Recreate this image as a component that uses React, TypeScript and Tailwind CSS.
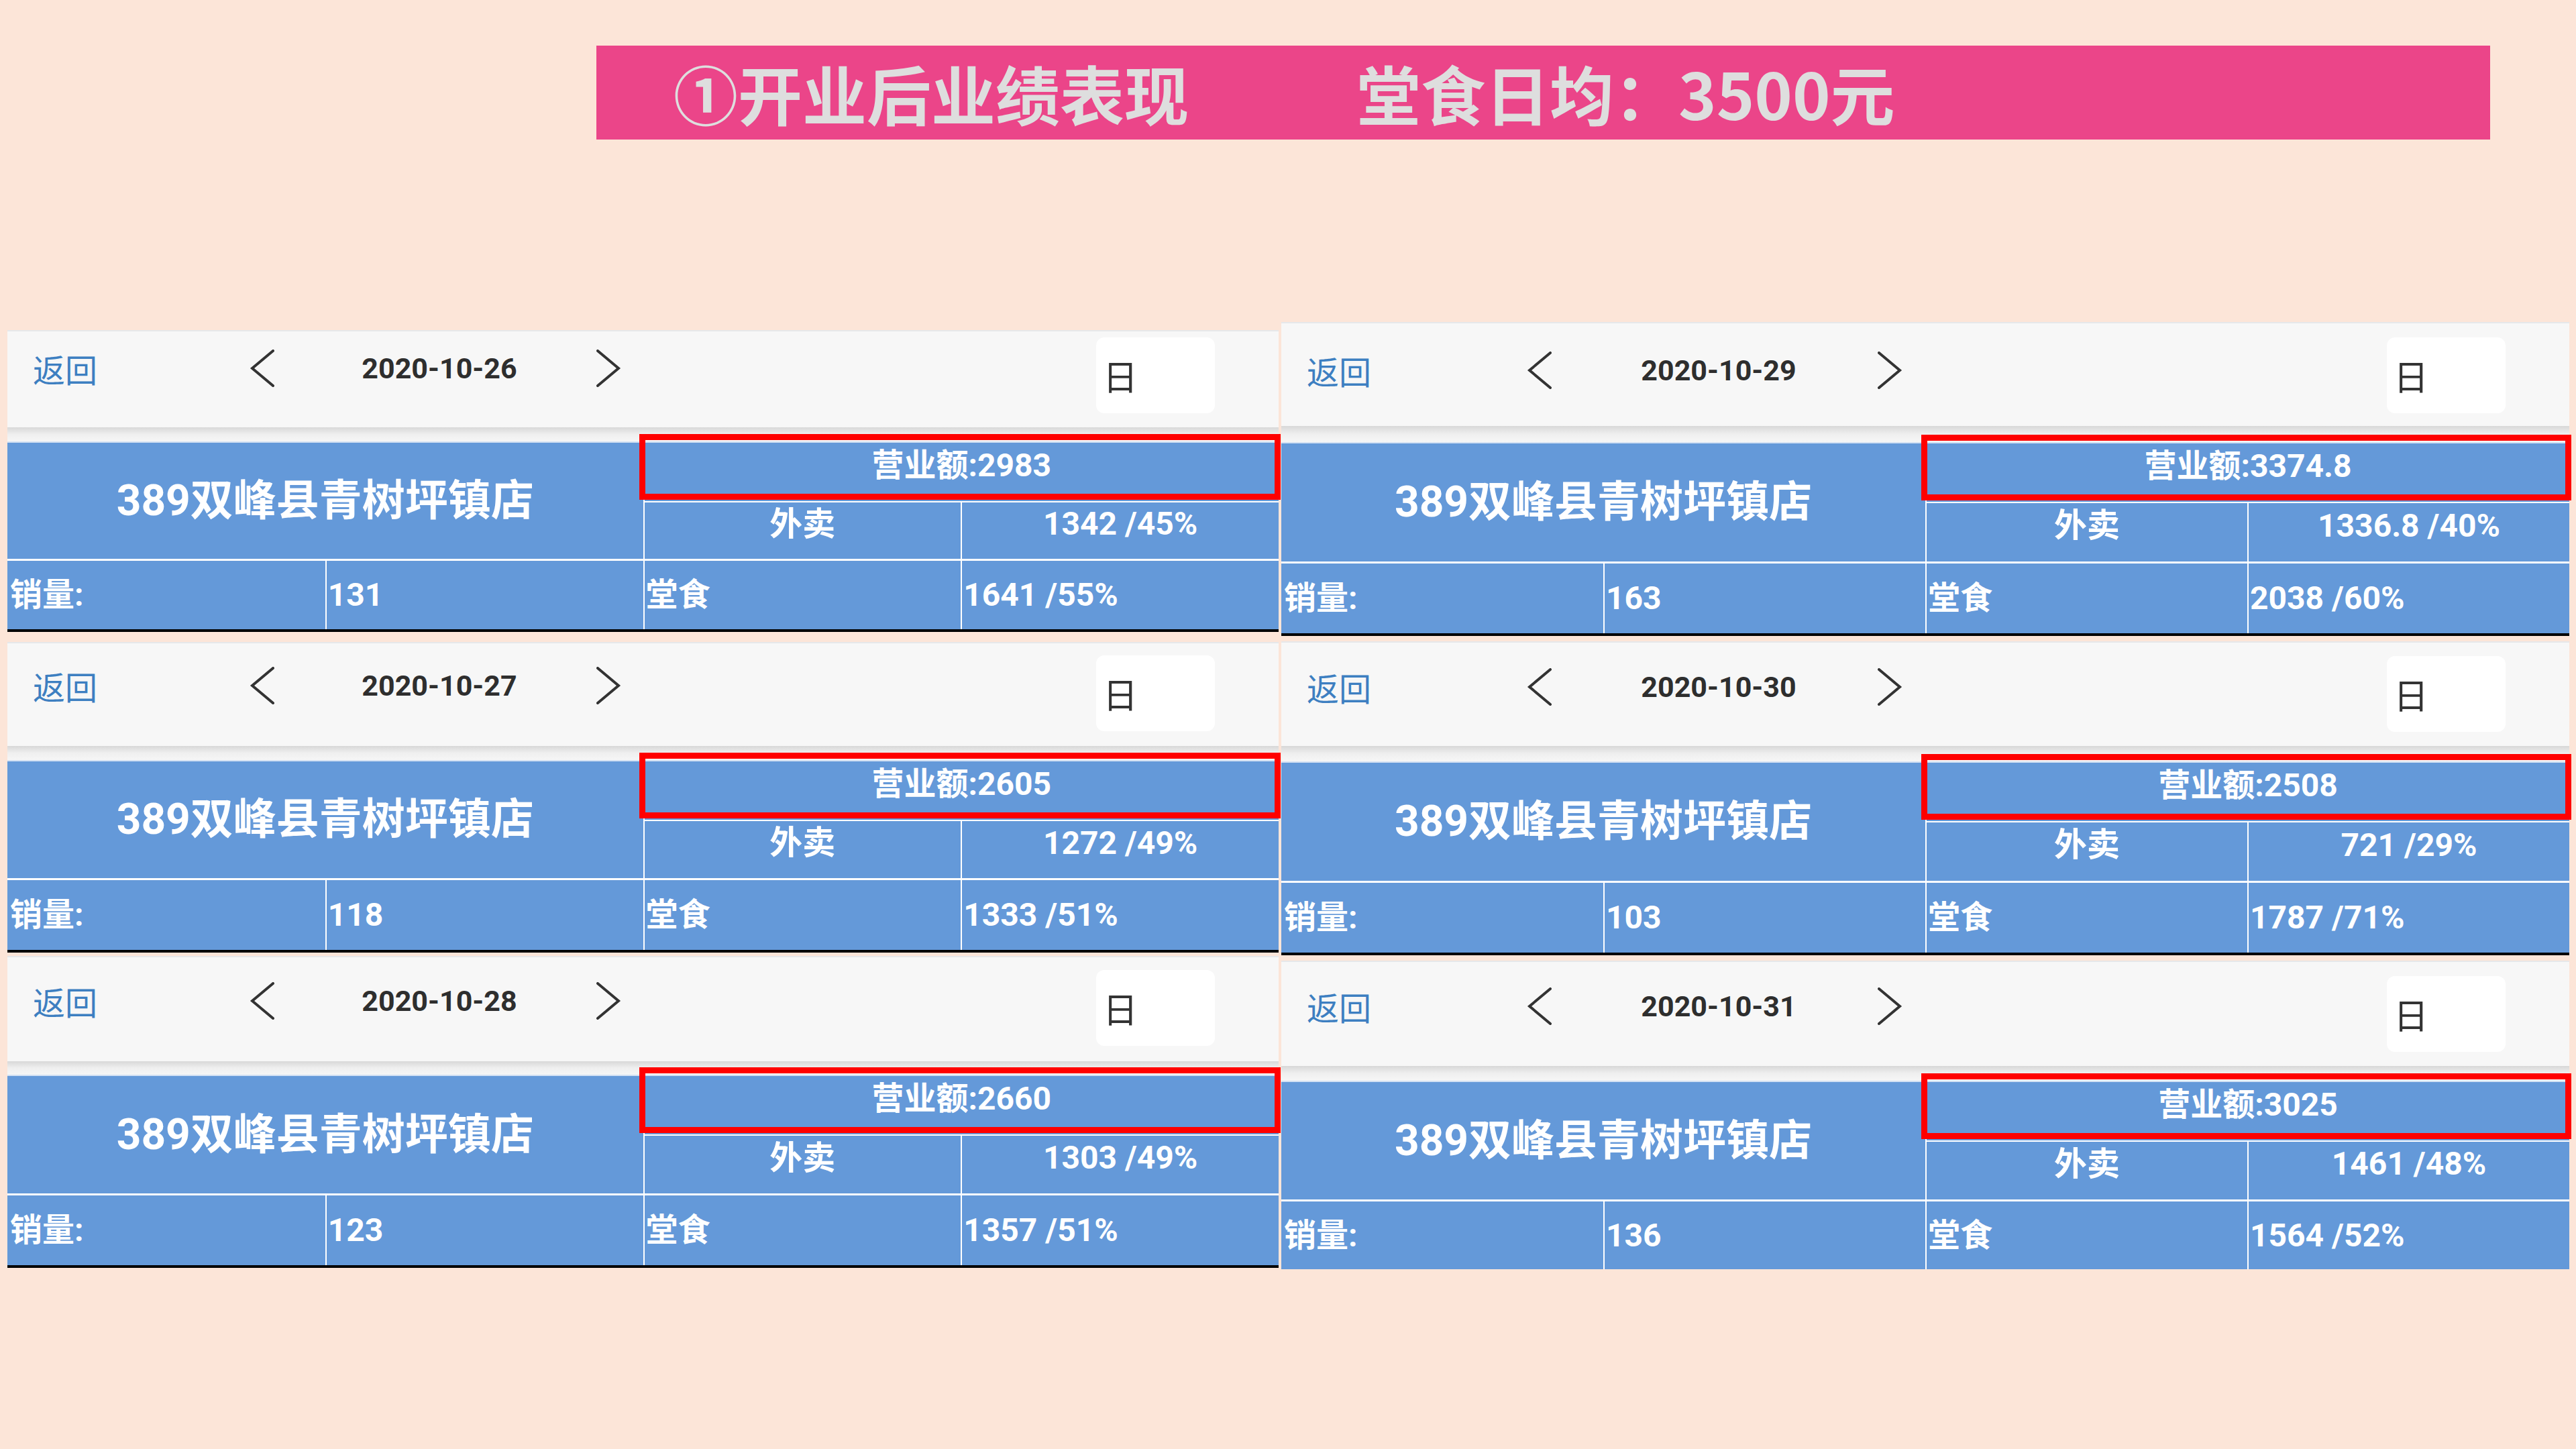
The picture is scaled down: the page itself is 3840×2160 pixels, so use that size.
import React from "react";

type Day = { date: string; rev: string; wm: string; qty: string; ts: string };

type Cfg = {
  head: string; // header height + bottom padding
  box: string; // top margin of the 日 box
  shadow: string;
  r1: string;
  r2: string;
  rb: string;
};

const left: (Day & { cfg: Cfg })[] = [
  {
    date: "2020-10-26", rev: "2983", wm: "1342 /45%", qty: "131", ts: "1641 /55%",
    cfg: { head: "h-[145px] pb-[33px]", box: "mt-[9px]", shadow: "h-[21px]", r1: "h-[87px]", r2: "h-[86px]", rb: "h-[106px]" },
  },
  {
    date: "2020-10-27", rev: "2605", wm: "1272 /49%", qty: "118", ts: "1333 /51%",
    cfg: { head: "h-[155px] pb-[27px]", box: "mt-[18px]", shadow: "h-[21px]", r1: "h-[87px]", r2: "h-[87px]", rb: "h-[108px]" },
  },
  {
    date: "2020-10-28", rev: "2660", wm: "1303 /49%", qty: "123", ts: "1357 /51%",
    cfg: { head: "h-[157px] pb-[25px]", box: "mt-[19px]", shadow: "h-[20px]", r1: "h-[87px]", r2: "h-[88px]", rb: "h-[108px]" },
  },
];
const right: (Day & { cfg: Cfg })[] = [
  {
    date: "2020-10-29", rev: "3374.8", wm: "1336.8 /40%", qty: "163", ts: "2038 /60%",
    cfg: { head: "h-[155px] pb-[13px]", box: "mt-[21px]", shadow: "h-[24px]", r1: "h-[87px]", r2: "h-[89px]", rb: "h-[108px]" },
  },
  {
    date: "2020-10-30", rev: "2508", wm: "721 /29%", qty: "103", ts: "1787 /71%",
    cfg: { head: "h-[156px] pb-[22px]", box: "mt-[20px]", shadow: "h-[23px]", r1: "h-[87px]", r2: "h-[89px]", rb: "h-[108px]" },
  },
  {
    date: "2020-10-31", rev: "3025", wm: "1461 /48%", qty: "136", ts: "1564 /52%",
    cfg: { head: "h-[157px] pb-[23px]", box: "mt-[21px]", shadow: "h-[22px]", r1: "h-[87px]", r2: "h-[88px]", rb: "h-[101px]" },
  },
];

function Chevron({ dir }: { dir: "l" | "r" }) {
  return (
    <svg width="40" height="56" viewBox="0 0 40 56" className="shrink-0">
      <polyline
        points={dir === "l" ? "35,2 4,28 35,54" : "5,2 36,28 5,54"}
        fill="none"
        stroke="#333333"
        strokeWidth="4"
        strokeLinecap="round"
        strokeLinejoin="miter"
      />
    </svg>
  );
}

function Panel({ d, cfg, last, big }: { d: Day; cfg: Cfg; last?: boolean; big?: boolean }) {
  return (
    <div className="flex flex-col">
      <div className={`flex items-center bg-[#f7f7f7] border-t-2 border-[#e6e8ea] ${cfg.head}`}>
        <span className="ml-[38px] w-[96px] shrink-0 text-[48px] leading-none text-[#3d7fc1] font-['Noto_Sans_CJK_SC',sans-serif]">
          返回
        </span>
        <div className={`flex items-center ${big ? "ml-[232px]" : "ml-[227px]"}`}>
          <Chevron dir="l" />
          <div
            className={`pl-[12px] text-center text-[43px] font-bold leading-none text-[#2e2e2e] font-['Roboto','Noto_Sans_CJK_SC',sans-serif] ${
              big ? "w-[480px]" : "w-[474px]"
            }`}
          >
            {d.date}
          </div>
          <Chevron dir="r" />
        </div>
        <div
          className={`ml-auto mr-[95px] self-start flex h-[113px] w-[177px] items-center rounded-[12px] bg-white pl-[10px] ${cfg.box}`}
        >
          <span className="text-[52px] leading-none text-[#333333] font-['Noto_Sans_CJK_SC',sans-serif]">日</span>
        </div>
      </div>
      <div className={`bg-linear-to-b from-[#d8d8d8] via-[#efefef] to-[#f6f6f6] ${cfg.shadow}`} />
      <div className="relative font-['Roboto','Noto_Sans_CJK_SC',sans-serif] font-bold text-white">
        <div className="grid grid-cols-4 border-t-2 border-[#d3e1f3] bg-[#6499d9]">
          <div className="col-span-2 row-span-2 flex items-center justify-center text-[64px] leading-none">
            389双峰县青树坪镇店
          </div>
          <div
            className={`col-span-2 flex items-center justify-center border-l-2 border-white pb-[20px] text-[48px] leading-none ${cfg.r1}`}
          >
            营业额:{d.rev}
          </div>
          <div
            className={`flex items-center justify-center border-l-2 border-t-2 border-white pb-[20px] text-[49px] leading-none ${cfg.r2}`}
          >
            外卖
          </div>
          <div
            className={`flex items-center justify-center border-l-2 border-t-2 border-white pb-[20px] text-[48px] leading-none ${cfg.r2}`}
          >
            {d.wm}
          </div>
        </div>
        <div className="h-[3px] bg-white" />
        <div
          className={`grid grid-cols-4 bg-[#6499d9] text-[48px] leading-none ${cfg.rb} ${
            last ? "" : "border-b-4 border-black"
          }`}
        >
          <div className="flex items-center pl-[4px]">销量:</div>
          <div className="flex items-center border-l-2 border-white pl-[2px]">{d.qty}</div>
          <div className="flex items-center border-l-2 border-white pl-[2px]">堂食</div>
          <div className="flex items-center border-l-2 border-white pl-[2px]">{d.ts}</div>
        </div>
        <div className="absolute top-[-11px] left-[calc(50%-6px)] right-[-3px] h-[98px] border-[9px] border-[#ff0000]" />
      </div>
    </div>
  );
}

export default function App() {
  return (
    <div className="relative h-[2160px] w-[3840px] overflow-hidden bg-[#fce5d8]">
      <div className="pt-[68px]">
        <div className="ml-[889px] flex h-[140px] w-[2823px] items-center bg-[#eb4589] pl-[115px] font-['Noto_Sans_CJK_SC',sans-serif] text-[96px] font-bold leading-none text-[#dedede]">
          <span>①开业后业绩表现</span>
          <span className="ml-[250px]">堂食日均：3500元</span>
        </div>
      </div>
      <div className="mt-[272px] ml-[11px] grid grid-cols-[1895px_1920px] gap-x-[4px]">
        <div className="flex flex-col pt-[12px]">
          <Panel d={left[0]} cfg={left[0].cfg} />
          <div className="h-[15px]" />
          <Panel d={left[1]} cfg={left[1].cfg} />
          <div className="h-[5px]" />
          <Panel d={left[2]} cfg={left[2].cfg} />
        </div>
        <div className="flex flex-col gap-[8px]">
          {right.map((d, i) => (
            <Panel key={d.date} d={d} cfg={d.cfg} big last={i === right.length - 1} />
          ))}
        </div>
      </div>
    </div>
  );
}
